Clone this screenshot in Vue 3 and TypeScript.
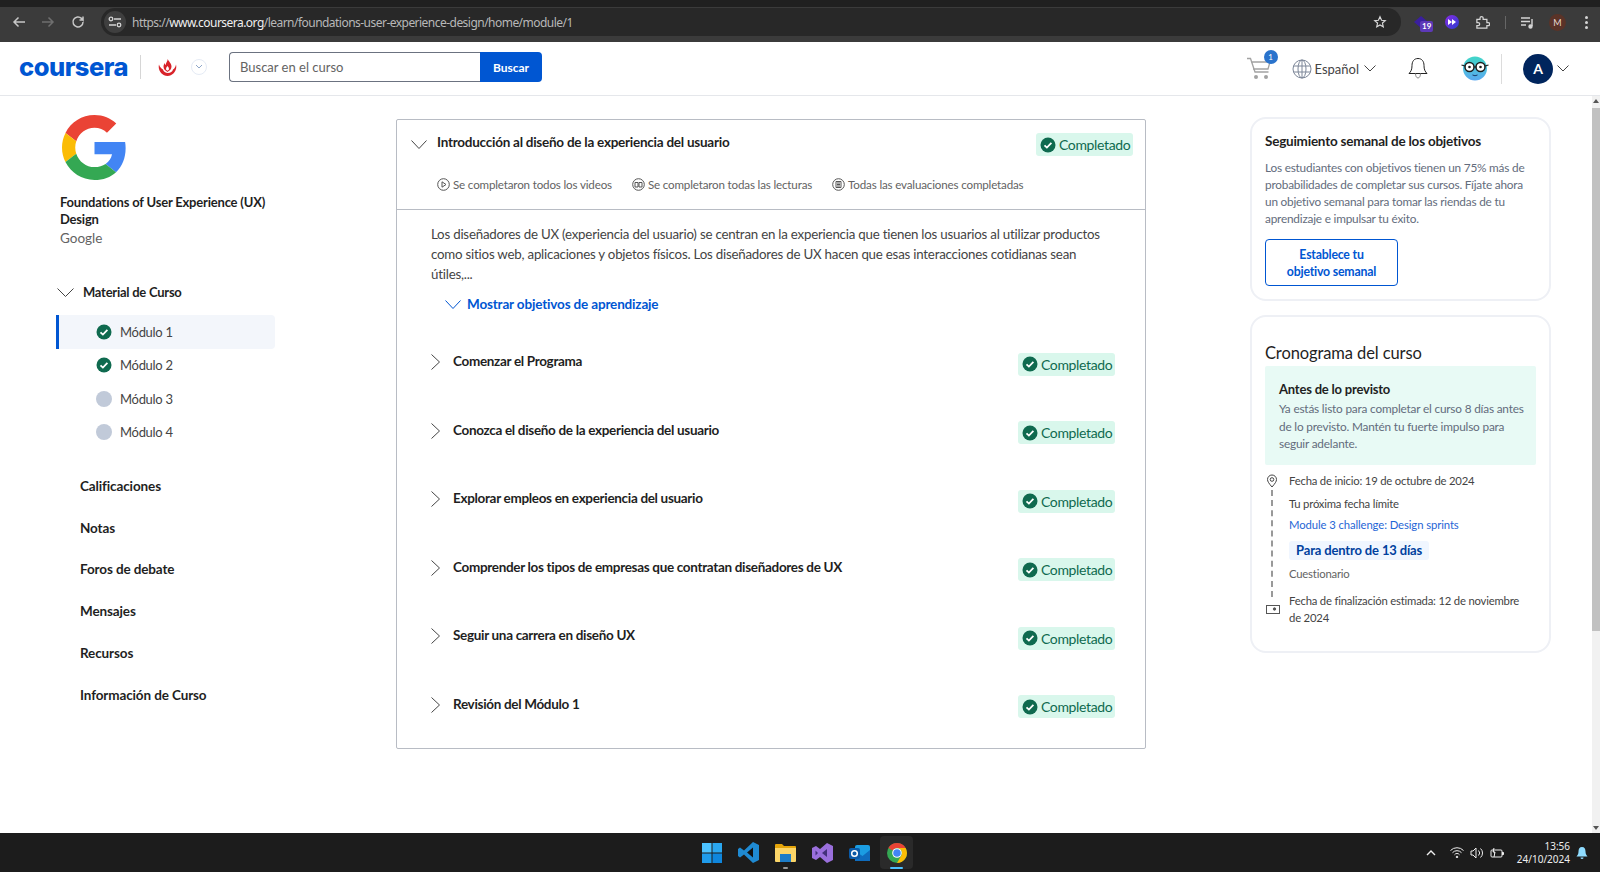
<script setup lang="ts">
const modules = [
  { name: 'Módulo 1', done: true, active: true },
  { name: 'Módulo 2', done: true, active: false },
  { name: 'Módulo 3', done: false, active: false },
  { name: 'Módulo 4', done: false, active: false },
]
const navItems = ['Calificaciones', 'Notas', 'Foros de debate', 'Mensajes', 'Recursos', 'Información de Curso']
const lessons = [
  'Comenzar el Programa',
  'Conozca el diseño de la experiencia del usuario',
  'Explorar empleos en experiencia del usuario',
  'Comprender los tipos de empresas que contratan diseñadores de UX',
  'Seguir una carrera en diseño UX',
  'Revisión del Módulo 1',
]
</script>

<template>
  <div class="screen">
    <div class="chrome">
      <div class="tabstrip"></div>
      <div class="toolbar">
        <svg class="cicon" width="14" height="14" viewBox="0 0 14 14" fill="none" stroke="#c7c7c7" stroke-width="1.5"><path d="M13 7H2M6.5 2.5 2 7l4.5 4.5" /></svg>
        <svg class="cicon dim" width="14" height="14" viewBox="0 0 14 14" fill="none" stroke="#6f6f6f" stroke-width="1.5"><path d="M1 7h11M7.5 2.5 12 7l-4.5 4.5" /></svg>
        <svg class="cicon" width="14" height="14" viewBox="0 0 14 14" fill="none" stroke="#c7c7c7" stroke-width="1.5"><path d="M12 7a5 5 0 1 1-1.5-3.6L12 5V1.5M12 5H8.5" /></svg>
        <div class="omnibox">
          <span class="tune">
            <svg width="14" height="12" viewBox="0 0 14 12" fill="none" stroke="#d5d5d5" stroke-width="1.3"><circle cx="3" cy="3" r="1.8" /><path d="M6 3h7M1 9h7" /><circle cx="11" cy="9" r="1.8" /></svg>
          </span>
          <span class="url"><span class="urlmute">https://</span>www.coursera.org<span class="urlmute">/learn/foundations-user-experience-design/home/module/1</span></span>
          <svg class="star" width="14" height="14" viewBox="0 0 24 24" fill="none" stroke="#d8d8d8" stroke-width="2"><path d="m12 3 2.7 6 6.3.6-4.8 4.2 1.4 6.4L12 17l-5.6 3.2 1.4-6.4L3 9.6 9.300 9z" /></svg>
        </div>
        <div class="exts">
          <span class="ext-badge-wrap">
            <svg width="14" height="12" viewBox="0 0 14 12"><path d="M7 0l7 6-7 6-7-6z" fill="#3a1f9e" /></svg>
            <span class="ext-badge">19</span>
          </span>
          <span class="ext-round">
            <svg width="8" height="8" viewBox="0 0 8 8"><path d="M0 1l4 3-4 3zM4 1l4 3-4 3z" fill="#fff" /></svg>
          </span>
          <svg width="15" height="15" viewBox="0 0 24 24" fill="none" stroke="#d5d5d5" stroke-width="2"><path d="M3 7h5V5a2.500 2.500 0 0 1 5 0v2h6v5h2a2.500 2.500 0 0 1 0 5h-2v4H3v-4h2a2.500 2.500 0 0 0 0-5H3z" /></svg>
          <span class="ext-sep"></span>
          <svg width="14" height="13" viewBox="0 0 14 13" fill="none" stroke="#d5d5d5" stroke-width="1.4"><path d="M0 2h9M0 5.500h9M0 9h5M11 3v7" /><circle cx="9.500" cy="10.500" r="1.500" fill="#d5d5d5" /></svg>
          <span class="profile">M</span>
          <span class="dots"><i></i><i></i><i></i></span>
        </div>
      </div>
    </div>

    <header class="header">
      <div class="header-left">
        <span class="logo">coursera</span>
        <span class="logo-sep"></span>
        <svg class="upc" width="19" height="17" viewBox="0 0 19 17">
          <path d="M1 5.500C-.5 11.500 4 17 9.500 17S19.500 11.500 18 5.500c-.5 2.500-1.500 4-3 5-.5 2-2.500 3.500-5 3.500s-4.500-1.500-5-3.500c-1.500-1-3.500-2.500-4-5z" fill="#d8232a" />
          <path d="M9.800 0c.7 2.500 3.700 4 3.700 7.500 0 2.500-1.500 4-4 5.500-2.500-1.500-4-3-4-5.500 0-1.500.7-2.500 1.500-3.500 0 1 .3 1.700 1 2C7.500 4 9.500 2.500 9.800 0z" fill="#d8232a" />
          <path d="M9.500 7c-1 1-1.500 2-1.500 3 0 .7.600 1.200 1.500 1.700.9-.5 1.500-1 1.500-1.700 0-1-.5-2-1.500-3z" fill="#fff" />
        </svg>
        <span class="org-caret">
          <svg width="8" height="6" viewBox="0 0 8 6" fill="none" stroke="#8ea6c8" stroke-width="1"><path d="m1 1 3 3 3-3" /></svg>
        </span>
        <div class="search">
          <div class="search-input">Buscar en el curso</div>
          <div class="search-btn">Buscar</div>
        </div>
      </div>
      <div class="header-right">
        <span class="cart">
          <svg width="26" height="24" viewBox="0 0 26 24" fill="none" stroke="#a2a2a2" stroke-width="1.300"><path d="M1 1.500h3.500L9 15h13.500M5 5h19l-2 7H7" /><circle cx="10" cy="20" r="2" fill="#a2a2a2" stroke="none" /><circle cx="20" cy="20" r="2" fill="#a2a2a2" stroke="none" /></svg>
          <span class="cart-badge">1</span>
        </span>
        <span class="lang">
          <svg width="20" height="20" viewBox="0 0 20 20" fill="none" stroke="#7c8698" stroke-width="1"><circle cx="10" cy="10" r="9" /><ellipse cx="10" cy="10" rx="4" ry="9" /><path d="M10 1v18M1.500 7h17M1.500 13h17" /></svg>
          <span class="lang-text">Español</span>
          <svg width="12" height="7" viewBox="0 0 12 7" fill="none" stroke="#444" stroke-width="1"><path d="m.5.500 5.500 5.500 5.500-5.500" /></svg>
        </span>
        <svg class="bell" width="20" height="23" viewBox="0 0 20 23" fill="none" stroke="#222" stroke-width="1"><path d="M10 1.500c-4 0-6 3-6 7 0 4-1 6-3 8h18c-2-2-3-4-3-8 0-4-2-7-6-7z" /><path d="M7.500 16.500c0 6 5 6 5 0" stroke="#888" /></svg>
        <span class="coach">
          <svg width="28" height="27" viewBox="0 0 28 27">
            <defs><linearGradient id="cg" x1="0" y1="0" x2="0" y2="1"><stop offset="0" stop-color="#41d6c8" /><stop offset="1" stop-color="#5aa9f0" /></linearGradient></defs>
            <circle cx="14" cy="13.500" r="12" fill="url(#cg)" />
            <circle cx="8.500" cy="12" r="4.500" fill="#fff" stroke="#1c1c1c" stroke-width="1.500" />
            <circle cx="19.500" cy="12" r="4.500" fill="#fff" stroke="#1c1c1c" stroke-width="1.500" />
            <circle cx="8.500" cy="12" r="1.300" fill="#1c1c1c" /><circle cx="19.500" cy="12" r="1.300" fill="#1c1c1c" />
            <path d="M13 12h2M4 11 .5 10M24 11l3.500-1" stroke="#1c1c1c" stroke-width="1.200" />
            <path d="M11.500 20q2.500 1.500 5 0" stroke="#1c3a6a" fill="none" />
          </svg>
        </span>
        <span class="head-sep"></span>
        <span class="avatar">A</span>
        <svg class="av-caret" width="12" height="7" viewBox="0 0 12 7" fill="none" stroke="#444" stroke-width="1"><path d="m.5.500 5.500 5.500 5.500-5.500" /></svg>
      </div>
    </header>

    <div class="content">
      <aside class="sidebar">
        <svg class="glogo" width="65" height="65" viewBox="0 0 48 48">
          <path fill="#EA4335" d="M24 9.500c3.540 0 6.710 1.220 9.210 3.600l6.850-6.850C35.900 2.380 30.470 0 24 0 14.620 0 6.510 5.380 2.560 13.220l7.980 6.190C12.430 13.720 17.740 9.500 24 9.500z" />
          <path fill="#4285F4" d="M46.980 24.550c0-1.570-.15-3.090-.38-4.550H24v9.020h12.940c-.58 2.960-2.260 5.480-4.780 7.180l7.730 6c4.510-4.180 7.090-10.360 7.090-17.650z" />
          <path fill="#FBBC05" d="M10.530 28.590c-.48-1.450-.76-2.990-.76-4.590s.27-3.140.76-4.590l-7.980-6.190C.92 16.460 0 20.120 0 24c0 3.880.92 7.540 2.560 10.780l7.970-6.190z" />
          <path fill="#34A853" d="M24 48c6.480 0 11.930-2.130 15.890-5.810l-7.730-6c-2.150 1.450-4.920 2.300-8.160 2.300-6.260 0-11.570-4.220-13.470-9.910l-7.980 6.190C6.510 42.620 14.620 48 24 48z" />
        </svg>
        <div class="course-title">Foundations of User Experience (UX) Design</div>
        <div class="course-org">Google</div>
        <div class="mat-head">
          <svg width="17" height="9" viewBox="0 0 17 9" fill="none" stroke="#444" stroke-width="1"><path d="m.5.500 8 8 8-8" /></svg>
          <span>Material de Curso</span>
        </div>
        <div class="mods">
          <div v-for="m in modules" :key="m.name" class="mod" :class="{ active: m.active }">
            <svg v-if="m.done" width="16" height="16" viewBox="0 0 16 16"><circle cx="8" cy="8" r="7.500" fill="#0f6a4f" /><path d="m4.500 8.300 2.400 2.300 4.500-4.700" fill="none" stroke="#fff" stroke-width="1.800" /></svg>
            <span v-else class="mod-dot"></span>
            <span class="mod-name">{{ m.name }}</span>
          </div>
        </div>
        <nav class="nav">
          <div v-for="n in navItems" :key="n" class="nav-item">{{ n }}</div>
        </nav>
      </aside>

      <main class="main">
        <section class="card">
          <div class="card-head">
            <div class="head-row">
              <svg class="head-chev" width="16" height="9" viewBox="0 0 16 9" fill="none" stroke="#444" stroke-width="1"><path d="m.5.500 7.500 8 7.500-8" /></svg>
              <span class="head-title">Introducción al diseño de la experiencia del usuario</span>
              <span class="pill head-pill">
                <svg width="16" height="16" viewBox="0 0 16 16"><circle cx="8" cy="8" r="7.500" fill="#0f6a4f" /><path d="m4.500 8.300 2.400 2.300 4.500-4.700" fill="none" stroke="#fff" stroke-width="1.800" /></svg>
                Completado
              </span>
            </div>
            <div class="stats">
              <span class="stat">
                <svg width="13" height="13" viewBox="0 0 13 13" fill="none" stroke="#555" stroke-width="1"><circle cx="6.500" cy="6.500" r="5.800" /><path d="M5 3.800v5.400l4-2.700z" /></svg>
                Se completaron todos los videos
              </span>
              <span class="stat">
                <svg width="13" height="13" viewBox="0 0 13 13" fill="none" stroke="#555" stroke-width="1"><circle cx="6.500" cy="6.500" r="5.800" /><path d="M3 4.500h3v4.500H3zM7 4.500h3v4.500H7z" /></svg>
                Se completaron todas las lecturas
              </span>
              <span class="stat">
                <svg width="13" height="13" viewBox="0 0 13 13" fill="none" stroke="#555" stroke-width="1"><circle cx="6.500" cy="6.500" r="5.800" /><path d="M4 3.500h5v6H4zM5 5h3M5 6.500h3M5 8h3" /></svg>
                Todas las evaluaciones completadas
              </span>
            </div>
          </div>
          <div class="card-body">
            <p class="desc">Los diseñadores de UX (experiencia del usuario) se centran en la experiencia que tienen los usuarios al utilizar productos como sitios web, aplicaciones y objetos físicos. Los diseñadores de UX hacen que esas interacciones cotidianas sean útiles,...</p>
            <div class="show-more">
              <svg width="16" height="9" viewBox="0 0 16 9" fill="none" stroke="#0056d2" stroke-width="1"><path d="m.5.500 7.500 8 7.500-8" /></svg>
              Mostrar objetivos de aprendizaje
            </div>
            <div class="lessons">
              <div v-for="l in lessons" :key="l" class="lesson">
                <svg width="9" height="16" viewBox="0 0 9 16" fill="none" stroke="#444" stroke-width="1"><path d="m.5.500 8 7.500-8 7.500" /></svg>
                <span class="lesson-title">{{ l }}</span>
                <span class="pill">
                  <svg width="16" height="16" viewBox="0 0 16 16"><circle cx="8" cy="8" r="7.500" fill="#0f6a4f" /><path d="m4.500 8.300 2.400 2.300 4.500-4.700" fill="none" stroke="#fff" stroke-width="1.800" /></svg>
                  Completado
                </span>
              </div>
            </div>
          </div>
        </section>
      </main>

      <aside class="right">
        <section class="rcard goal">
          <h3 class="goal-title">Seguimiento semanal de los objetivos</h3>
          <p class="goal-text">Los estudiantes con objetivos tienen un 75% más de probabilidades de completar sus cursos. Fíjate ahora un objetivo semanal para tomar las riendas de tu aprendizaje e impulsar tu éxito.</p>
          <div class="goal-btn">Establece tu<br />objetivo semanal</div>
        </section>
        <section class="rcard sched">
          <h2 class="sched-title">Cronograma del curso</h2>
          <div class="ahead">
            <div class="ahead-title">Antes de lo previsto</div>
            <p class="ahead-text">Ya estás listo para completar el curso 8 días antes de lo previsto. Mantén tu fuerte impulso para seguir adelante.</p>
          </div>
          <div class="timeline">
            <div class="rail">
              <svg width="12" height="14" viewBox="0 0 12 14" fill="none" stroke="#444" stroke-width="1"><path d="M6 13C3 9.500 1.500 7.500 1.500 5.500a4.500 4.500 0 0 1 9 0C10.500 7.500 9 9.500 6 13z" /><circle cx="6" cy="5.500" r="1.800" /></svg>
              <span class="rail-line"></span>
              <svg width="14" height="10" viewBox="0 0 14 10" fill="none" stroke="#555" stroke-width="1"><rect x=".5" y=".5" width="13" height="8" /><circle cx="8.500" cy="4" r="1.200" fill="#555" /></svg>
            </div>
            <div class="tl-body">
              <div class="tl-line first">Fecha de inicio: 19 de octubre de 2024</div>
              <div class="tl-line next">Tu próxima fecha límite</div>
              <div class="tl-link">Module 3 challenge: Design sprints</div>
              <div class="tl-due">Para dentro de 13 días</div>
              <div class="tl-kind">Cuestionario</div>
              <div class="tl-line end">Fecha de finalización estimada: 12 de noviembre de 2024</div>
            </div>
          </div>
        </section>
      </aside>

      <div class="scrollbar">
        <span class="sb-up"></span>
        <span class="sb-thumb"></span>
        <span class="sb-down"></span>
      </div>
    </div>

    <footer class="taskbar">
      <div class="apps">
        <span class="app">
          <svg width="20" height="20" viewBox="0 0 20 20"><rect width="9.500" height="9.500" fill="#4cc2ff" /><rect x="10.500" width="9.500" height="9.500" fill="#2aa7f0" /><rect y="10.500" width="9.500" height="9.500" fill="#1f9bea" /><rect x="10.500" y="10.500" width="9.500" height="9.500" fill="#0f86dc" /></svg>
        </span>
        <span class="app">
          <svg width="21" height="21" viewBox="0 0 21 21"><path d="M15 0 21 3v15l-6 3-9-8.500-4 3L0 14v-7l2-1.500 4 3z" fill="#1f8ad2" /><path d="M15 5.500 9 10.500l6 5z" fill="#121212" /></svg>
        </span>
        <span class="app folder">
          <svg width="21" height="19" viewBox="0 0 21 19"><path d="M0 2a1 1 0 0 1 1-1h6l2 2h11a1 1 0 0 1 1 1v3H0z" fill="#e5a50a" /><path d="M0 5h21v13a1 1 0 0 1-1 1H1a1 1 0 0 1-1-1z" fill="#fbd568" /><rect x="5" y="11" width="11" height="8" fill="#1c7cc8" /></svg>
          <i class="app-dot"></i>
        </span>
        <span class="app">
          <svg width="21" height="20" viewBox="0 0 21 20"><path d="M15 0 21 3v14l-6 3-7-6-4 3-4-2V5l4-2 4 3z" fill="#9a6fdc" /><path d="M15 6 10 10l5 4zM3.500 7.500v5l2.500-2.500z" fill="#43307a" /></svg>
        </span>
        <span class="app">
          <svg width="21" height="20" viewBox="0 0 21 20"><rect x="6" y="2" width="15" height="16" rx="2" fill="#1b9de2" /><path d="M6 8l7.500 5L21 7v11H6z" fill="#0f6cbd" /><rect y="5" width="11" height="11" rx="2" fill="#0a5aa8" /><circle cx="5.500" cy="10.500" r="2.800" fill="none" stroke="#fff" stroke-width="1.500" /></svg>
        </span>
        <span class="app chrome-app">
          <svg width="20" height="20" viewBox="0 0 20 20">
            <circle cx="10" cy="10" r="10" fill="#34a853" />
            <path d="M10 0a10 10 0 0 1 8.660 5H10a5 5 0 0 0-4.330 2.500L1.340 5A10 10 0 0 1 10 0z" fill="#ea4335" />
            <path d="M18.660 5A10 10 0 0 1 10 20l4.330-7.500A5 5 0 0 0 10 5z" fill="#fbbc05" />
            <circle cx="10" cy="10" r="4.800" fill="#fff" /><circle cx="10" cy="10" r="3.800" fill="#4285f4" />
          </svg>
          <i class="app-bar"></i>
        </span>
      </div>
      <div class="tray">
        <svg width="10" height="6" viewBox="0 0 10 6" fill="none" stroke="#eee" stroke-width="1.400"><path d="m1 5 4-4 4 4" /></svg>
        <svg class="wifi" width="14" height="11" viewBox="0 0 14 11" fill="none" stroke="#eee" stroke-width="1"><path d="M.5 3.500a9 9 0 0 1 13 0M2.500 5.700a6 6 0 0 1 9 0M4.500 7.800a3 3 0 0 1 5 0" /><circle cx="7" cy="10" r=".8" fill="#eee" /></svg>
        <svg width="14" height="12" viewBox="0 0 14 12" fill="none" stroke="#eee" stroke-width="1"><path d="M1 4h2l3-3v10L3 8H1zM8.500 3.500a3.500 3.500 0 0 1 0 5M10.500 1.500a6 6 0 0 1 0 9" /></svg>
        <svg width="14" height="12" viewBox="0 0 14 12" fill="none" stroke="#eee" stroke-width="1"><rect x="1" y="3" width="11" height="7" rx="1" /><path d="M12 5.500h1.500v2H12M4 1 3 5h2L4 10" fill="#eee" /></svg>
        <div class="clock"><div>13:56</div><div>24/10/2024</div></div>
        <svg width="12" height="14" viewBox="0 0 12 14"><path d="M6 1C3.500 1 2.500 3 2.500 5.500S1.500 9 .5 10.500h11c-1-1.500-2-2.500-2-5S8.500 1 6 1z" fill="#8fdcff" /><path d="M4.500 11.500h3a1.500 1.500 0 0 1-3 0z" fill="#8fdcff" /></svg>
      </div>
    </footer>
  </div>
</template>

<style scoped>
.screen { height: 872px; width: 1600px; display: flex; flex-direction: column; overflow: hidden; background: #fff; font-family: Lato, "Noto Sans", "Liberation Sans", sans-serif; color: #1f1f1f; }
.chrome { height: 42px; background: #3b3b3b; flex: none; }
.tabstrip { height: 7px; background: #202020; }
.toolbar { height: 30px; display: flex; align-items: center; padding-left: 12px; }
.cicon { margin-right: 15px; flex: none; }
.cicon.dim { margin-right: 16px; }
.omnibox { margin-left: 1px; width: 1300px; height: 28px; border-radius: 14px; background: #282828; display: flex; align-items: center; flex: none; }
.tune { width: 22px; height: 22px; border-radius: 50%; background: #3f3f3f; display: flex; align-items: center; justify-content: center; margin-left: 3px; }
.url { margin-left: 6px; font-family: "Noto Sans", sans-serif; font-size: 12px; color: #f0f0f0; letter-spacing: -0.53px; white-space: nowrap; }
.urlmute { color: #b8b8b8; }
.star { margin-left: auto; margin-right: 14px; }
.exts { display: flex; align-items: center; margin-left: 13px; gap: 0; }
.ext-badge-wrap { position: relative; display: inline-flex; width: 20px; }
.ext-badge { position: absolute; left: 6px; top: 5px; background: #5d39b8; color: #fff; font-size: 8px; font-weight: 700; padding: 0 2px; border-radius: 2px; line-height: 11px; }
.ext-round { width: 14px; height: 14px; border-radius: 50%; background: linear-gradient(135deg, #8a2be2, #2a3cd0); display: flex; align-items: center; justify-content: center; margin: 0 16px 0 11px; }
.ext-sep { width: 1px; height: 13px; background: #666; margin: 0 15px; }
.profile { width: 17px; height: 17px; border-radius: 50%; background: #5a3328; color: #e8d8d0; font-size: 9px; display: flex; align-items: center; justify-content: center; margin: 0 19px 0 14px; }
.dots { display: flex; flex-direction: column; gap: 2px; }
.dots i { width: 3px; height: 3px; border-radius: 50%; background: #d5d5d5; display: block; }

.header { height: 54px; flex: none; display: flex; align-items: center; padding-left: 19px; border-bottom: 1px solid #e5e7eb; box-sizing: border-box; }
.header-left { display: flex; align-items: center; margin-bottom: 3px; }
.logo { font-family: Inter, "Liberation Sans", sans-serif; font-weight: 800; font-size: 25.500px; letter-spacing: -0.5px; color: #0056d2; line-height: 1; width: 107px; white-space: nowrap; }
.logo-sep { width: 1px; height: 24px; background: #d6d6d6; margin: 0 17px 0 14px; }
.upc { flex: none; }
.org-caret { width: 16px; height: 16px; border: 1px solid #e5ebf5; border-radius: 50%; box-sizing: border-box; display: flex; align-items: center; justify-content: center; margin-left: 14px; }
.search { display: flex; margin-left: 22px; height: 30px; }
.search-input { width: 251px; border: 1px solid #6b7280; border-right: none; border-radius: 4px 0 0 4px; font-size: 13px; color: #636363; display: flex; align-items: center; padding-left: 10px; box-sizing: border-box; }
.search-btn { width: 62px; background: #0056d2; color: #fff; font-size: 12px; font-weight: 700; border-radius: 0 4px 4px 0; display: flex; align-items: center; justify-content: center; }
.header-right { margin-left: auto; display: flex; align-items: center; padding-right: 31px; }
.cart { position: relative; display: flex; margin-right: 20px; }
.cart-badge { position: absolute; left: 18px; top: -7px; width: 14px; height: 14px; border-radius: 50%; background: #2a73cc; color: #fff; font-size: 8px; display: flex; align-items: center; justify-content: center; }
.lang { display: flex; align-items: center; gap: 3px; }
.lang-text { font-size: 13px; color: #444; margin-right: 2px; }
.bell { margin-left: 32px; }
.coach { display: flex; margin-left: 33px; }
.head-sep { width: 1px; height: 30px; background: #dcdcdc; margin: 0 21px 0 12px; }
.avatar { width: 30px; height: 30px; border-radius: 50%; background: #00255d; color: #fff; font-size: 14px; font-weight: 700; display: flex; align-items: center; justify-content: center; }
.av-caret { margin-left: 4px; }

.content { flex: 1; display: flex; position: relative; min-height: 0; }
.sidebar { width: 396px; flex: none; padding: 19px 0 0 56px; box-sizing: border-box; }
.glogo { display: block; margin-left: 6px; }
.course-title { margin: 14px 0 0 4px; width: 215px; font-size: 13px; line-height: 17px; font-weight: 700; color: #1f1f1f; letter-spacing: -0.2px; }
.course-org { margin: 1px 0 0 4px; font-size: 13.500px; line-height: 19px; color: #636363; }
.mat-head { display: flex; align-items: center; gap: 9px; margin: 34px 0 0 1px; height: 20px; font-size: 13px; font-weight: 700; color: #1f1f1f; letter-spacing: -0.25px; }
.mods { margin-top: 13px; width: 219px; }
.mod { height: 33.500px; display: flex; align-items: center; padding-left: 40px; box-sizing: border-box; gap: 8px; }
.mod.active { background: #f3f6fb; border-left: 3px solid #0056d2; padding-left: 37px; border-radius: 0 4px 4px 0; }
.mod-dot { width: 16px; height: 16px; border-radius: 50%; background: #c1cad9; }
.mod-name { font-size: 13px; color: #444; letter-spacing: -0.3px; }
.nav { margin: 16px 0 0 24px; }
.nav-item { height: 41.800px; display: flex; align-items: center; font-size: 13.500px; font-weight: 700; color: #1f1f1f; letter-spacing: -0.12px; }

.main { width: 854px; flex: none; padding-top: 23px; box-sizing: border-box; }
.card { width: 750px; height: 630px; border: 1px solid #b8bcc4; border-radius: 2px; box-sizing: border-box; }
.card-head { height: 90px; box-sizing: border-box; border-bottom: 1px solid #b8bcc4; padding: 13px 12px 0 14px; }
.head-row { display: flex; align-items: flex-start; }
.head-chev { margin-top: 7px; }
.head-title { margin-left: 10px; margin-top: -1px; font-size: 13.500px; font-weight: 700; color: #1f1f1f; line-height: 20px; letter-spacing: -0.25px; }
.pill { margin-left: auto; width: 97px; height: 23px; background: #d9f7ec; border-radius: 3px; display: flex; align-items: center; gap: 3px; padding-left: 4px; box-sizing: border-box; font-size: 14px; color: #0f6a4f; flex: none; white-space: nowrap; letter-spacing: -0.35px; }
.stats { display: flex; margin: 22px 0 0 26px; gap: 20px; }
.stat { display: flex; align-items: center; gap: 3px; font-size: 11.600px; color: #636363; white-space: nowrap; letter-spacing: -0.16px; }
.card-body { padding: 14px 30px 0 34px; }
.desc { margin: 0; padding-right: 8px; font-size: 13.300px; line-height: 20px; color: #444; letter-spacing: -0.22px; }
.show-more { display: flex; align-items: center; gap: 6px; margin: 10px 0 0 14px; height: 20px; font-size: 13.500px; font-weight: 700; color: #0056d2; letter-spacing: -0.16px; }
.lessons { margin-top: 37px; }
.lesson { height: 68.500px; display: flex; align-items: flex-start; box-sizing: border-box; }
.lesson > svg { margin-top: 3px; flex: none; }
.lesson-title { margin-left: 13px; font-size: 13.500px; font-weight: 700; color: #1f1f1f; line-height: 20px; letter-spacing: -0.32px; }
.lesson .pill { margin-top: 1.500px; }

.right { width: 301px; flex: none; padding-top: 21px; box-sizing: border-box; display: flex; flex-direction: column; gap: 14px; }
.rcard { border: 2px solid #eef0f5; border-radius: 16px; box-sizing: border-box; padding: 0 13px; }
.goal { height: 184px; padding-top: 12px; }
.goal-title { margin: 0; font-size: 13.500px; font-weight: 700; line-height: 20px; color: #1f1f1f; letter-spacing: -0.23px; }
.goal-text { margin: 8px 0 0; font-size: 11.800px; line-height: 17px; color: #636c7c; letter-spacing: -0.2px; }
.goal-btn { margin-top: 12px; width: 133px; height: 47px; border: 1px solid #0056d2; border-radius: 4px; box-sizing: border-box; font-size: 12.300px; font-weight: 700; color: #0056d2; line-height: 17px; display: flex; align-items: center; justify-content: center; text-align: center; letter-spacing: -0.2px; }
.sched { height: 338px; padding-top: 24px; }
.sched-title { margin: 0 0 1px; font-size: 16.500px; font-weight: 400; line-height: 24px; color: #1f1f1f; letter-spacing: -0.1px; }
.ahead { width: 271px; height: 99px; background: #e8faf5; border-radius: 2px; padding: 14px 8px 0 14px; box-sizing: border-box; }
.ahead-title { font-size: 13px; font-weight: 700; line-height: 18px; letter-spacing: -0.2px; }
.ahead-text { margin: 2px 0 0; font-size: 11.800px; line-height: 17.500px; color: #636c7c; letter-spacing: -0.18px; }
.timeline { display: flex; margin-top: 7px; }
.rail { width: 24px; padding: 2px 0 0 1px; box-sizing: border-box; display: flex; flex-direction: column; align-items: flex-start; }
.rail-line { height: 107px; border-left: 2px dashed #999; margin: 2px 0 8px 5px; }
.tl-body { flex: 1; font-size: 11.300px; line-height: 17px; color: #444; letter-spacing: -0.2px; }
.tl-line.next { margin-top: 6px; }
.tl-link { color: #1f66d6; margin-top: 4px; letter-spacing: -0.1px; }
.tl-due { margin-top: 8px; display: inline-block; background: #f0f6ff; color: #00419e; font-weight: 700; font-size: 13px; line-height: 19px; padding: 0 7px; border-radius: 3px; letter-spacing: -0.15px; }
.tl-kind { margin-top: 5px; color: #636363; }
.tl-line.end { margin-top: 10px; padding-right: 10px; }

.scrollbar { position: absolute; right: 0; top: 0; bottom: 0; width: 8px; background: #f1f1f1; }
.sb-thumb { position: absolute; left: 0; right: 0; top: 12px; height: 523px; background: #c1c1c1; }
.sb-up, .sb-down { position: absolute; left: 1px; width: 0; height: 0; border-left: 3px solid transparent; border-right: 3px solid transparent; }
.sb-up { top: 3px; border-bottom: 4px solid #555; }
.sb-down { bottom: 3px; border-top: 4px solid #555; }

.taskbar { height: 39px; flex: none; background: #1c1c1c; position: relative; display: flex; align-items: center; justify-content: center; padding-left: 8px; box-sizing: border-box; }
.apps { display: flex; align-items: center; gap: 16px; }
.app { position: relative; display: flex; width: 21px; height: 33px; align-items: center; justify-content: center; }
.chrome-app { background: #2a2a2a; width: 33px; border-radius: 4px; margin: 0 -6px; }
.app-dot { position: absolute; bottom: 0; left: 8px; width: 5px; height: 2px; background: #999; border-radius: 1px; }
.app-bar { position: absolute; bottom: 0; left: 10px; width: 13px; height: 2px; background: #4cc2ff; border-radius: 1px; }
.tray { position: absolute; right: 12px; top: 0; bottom: 0; display: flex; align-items: center; gap: 6px; color: #eee; }
.wifi { margin-left: 8px; }
.clock { margin-left: 7px; font-family: "Noto Sans", sans-serif; font-size: 10px; line-height: 13px; text-align: right; color: #eee; }
</style>
